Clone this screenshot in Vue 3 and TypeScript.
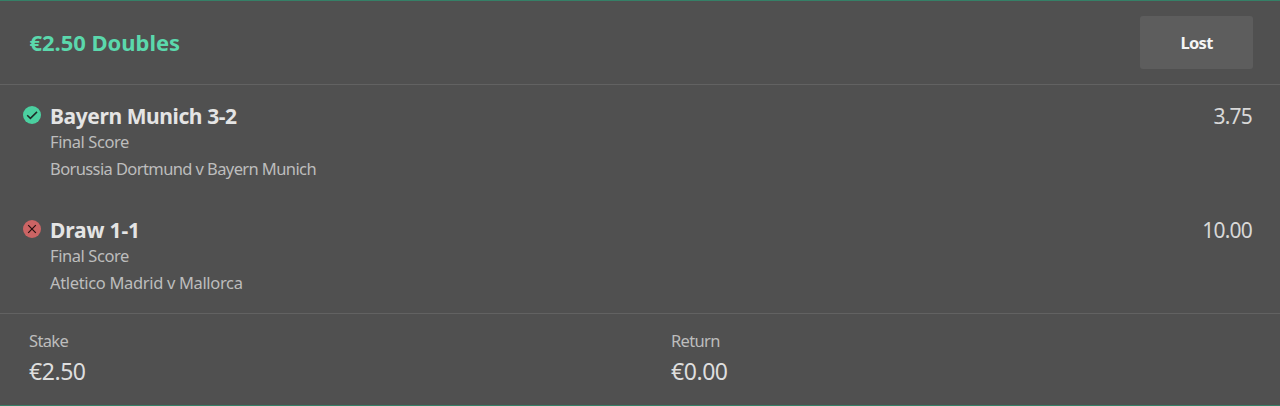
<script setup lang="ts">
interface Selection {
  name: string
  market: string
  fixture: string
  odds: string
  won: boolean
}

const selections: Selection[] = [
  { name: 'Bayern Munich 3-2', market: 'Final Score', fixture: 'Borussia Dortmund v Bayern Munich', odds: '3.75', won: true },
  { name: 'Draw 1-1', market: 'Final Score', fixture: 'Atletico Madrid v Mallorca', odds: '10.00', won: false },
]

const totals = [
  { label: 'Stake', value: '€2.50' },
  { label: 'Return', value: '€0.00' },
]
</script>

<template>
  <section class="bet">
    <header class="head">
      <h1 class="title">€2.50 Doubles</h1>
      <div class="status">Lost</div>
    </header>
    <div class="list">
      <article v-for="s in selections" :key="s.name" class="item">
        <svg class="icon" viewBox="0 0 18 18" width="18" height="18">
          <circle cx="9" cy="9" r="9" :class="s.won ? 'won' : 'lost'" />
          <path v-if="s.won" class="mark" d="M4.2 9.3 L7.4 12.4 L14 5.9" />
          <path v-else class="mark thin" d="M5.2 5.2 L12.8 12.8 M12.8 5.2 L5.2 12.8" />
        </svg>
        <div class="info">
          <div class="name">{{ s.name }}</div>
          <div class="sub market">{{ s.market }}</div>
          <div class="sub fixture">{{ s.fixture }}</div>
        </div>
        <div class="odds">{{ s.odds }}</div>
      </article>
    </div>
    <footer class="foot">
      <div v-for="t in totals" :key="t.label" class="total">
        <div class="label">{{ t.label }}</div>
        <div class="value">{{ t.value }}</div>
      </div>
    </footer>
  </section>
</template>

<style>
body {
  margin: 0;
  background: #505050;
}
</style>

<style scoped>
.bet {
  box-sizing: border-box;
  height: 406px;
  background: #505050;
  border-top: 1px solid #358067;
  border-bottom: 1px solid #358067;
  font-family: "Noto Sans", "Open Sans", sans-serif;
  color: #e0e0e0;
  white-space: nowrap;
}
.head {
  box-sizing: border-box;
  height: 84px;
  border-bottom: 1px solid #626262;
  display: flex;
  justify-content: space-between;
  align-items: flex-start;
  padding: 15px 27px 0 29.5px;
}
.title {
  margin: 0;
  font-size: 22px;
  line-height: 53px;
  font-weight: 700;
  letter-spacing: -0.04px;
  color: #5bd8ac;
}
.status {
  width: 113px;
  height: 53px;
  border-radius: 3px;
  background: #5d5d5d;
  text-align: center;
  font-size: 16.5px;
  line-height: 53px;
  font-weight: 700;
  letter-spacing: -0.7px;
  color: #f4f4f4;
}
.item {
  box-sizing: border-box;
  height: 114px;
  padding: 19px 28px 0 23px;
  display: flex;
  align-items: flex-start;
}
.icon {
  margin: 2px 9px 0 0;
  flex: none;
}
.won { fill: #4bd0a0; }
.lost { fill: #cb6464; }
.mark {
  fill: none;
  stroke: #1e2b27;
  stroke-width: 1.5;
}
.thin {
  stroke: #24100f;
  stroke-width: 1.2;
}
.info { flex: 1; }
.name {
  font-size: 21px;
  line-height: 24px;
  font-weight: 700;
  letter-spacing: -0.41px;
  color: #e4e4e4;
}
.item:last-child .name { letter-spacing: -0.15px; }
.sub {
  font-size: 16.5px;
  line-height: 27px;
  color: #bdbdbd;
}
.market { letter-spacing: -0.42px; }
.fixture { letter-spacing: -0.6px; }
.item:last-child .fixture { letter-spacing: -0.34px; }
.odds {
  font-size: 21px;
  line-height: 24px;
  letter-spacing: -0.8px;
  color: #d8d8d8;
}
.foot {
  box-sizing: border-box;
  height: 92px;
  border-top: 1px solid #626262;
  display: grid;
  grid-template-columns: 642px 1fr;
  padding: 15px 0 0 29px;
}
.label {
  font-size: 16.5px;
  line-height: 24px;
  letter-spacing: -0.65px;
  color: #bdbdbd;
}
.value {
  font-size: 23px;
  line-height: 36px;
  letter-spacing: -0.45px;
  color: #dedede;
}
</style>
